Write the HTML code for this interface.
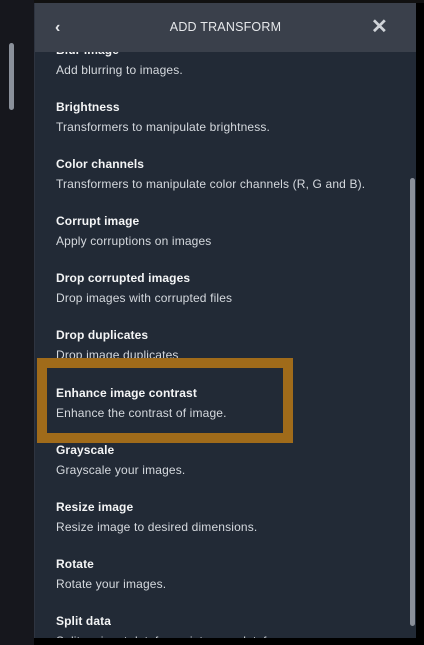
<!DOCTYPE html>
<html><head><style>
body{margin:0;width:424px;height:645px;background:#000;position:relative;overflow:hidden;font-family:"Liberation Sans",sans-serif}
.left{position:absolute;left:0;top:0;width:34px;height:645px;background:#16171d}
.lsb{position:absolute;left:9px;top:43px;width:5px;height:67px;background:#8a909a;border-radius:3px}
.panel{position:absolute;left:34px;top:3px;width:381px;height:635px;background:#222a36;overflow:hidden;border-left:1px solid #2e3440}
.hdr{position:absolute;left:0;top:0;width:381px;height:49px;background:#3a404b;z-index:2;color:#e6e8eb;font-size:12.5px;text-align:center;line-height:49px;letter-spacing:.2px}
.hdr .b{position:absolute;left:20px;top:0;font-size:16px;font-weight:bold}
.hdr .x{position:absolute;right:28px;top:0;font-size:20px;font-weight:bold;color:#cfd3d8}
.it{position:absolute;left:21px;color:#fff}
.t{font-size:12px;font-weight:bold;color:#f4f5f6;letter-spacing:.1px}
.d{font-size:12px;color:#d5d9de;margin-top:6px;letter-spacing:.15px}
.sb{position:absolute;left:375px;top:175px;width:5px;height:448px;background:#8a909a;border-radius:3px}
.hl{position:absolute;left:37px;top:358px;width:236px;height:65px;border:10px solid #a06b1a}
.top{position:absolute;left:0;top:0;width:424px;height:3px;background:#111}
</style></head><body>
<div class="top"></div>
<div class="left"><div class="lsb"></div></div>
<div class="panel">
<div class="hdr"><span class="b">&#8249;</span>ADD TRANSFORM<span class="x">&#10005;</span></div>
<div class="it" style="top:40px"><div class="t">Blur image</div><div class="d">Add blurring to images.</div></div>
<div class="it" style="top:97px"><div class="t">Brightness</div><div class="d">Transformers to manipulate brightness.</div></div>
<div class="it" style="top:154px"><div class="t">Color channels</div><div class="d">Transformers to manipulate color channels (R, G and B).</div></div>
<div class="it" style="top:211px"><div class="t">Corrupt image</div><div class="d">Apply corruptions on images</div></div>
<div class="it" style="top:268px"><div class="t">Drop corrupted images</div><div class="d">Drop images with corrupted files</div></div>
<div class="it" style="top:325px"><div class="t">Drop duplicates</div><div class="d">Drop image duplicates</div></div>
<div class="it" style="top:383px"><div class="t">Enhance image contrast</div><div class="d">Enhance the contrast of image.</div></div>
<div class="it" style="top:440px"><div class="t">Grayscale</div><div class="d">Grayscale your images.</div></div>
<div class="it" style="top:497px"><div class="t">Resize image</div><div class="d">Resize image to desired dimensions.</div></div>
<div class="it" style="top:554px"><div class="t">Rotate</div><div class="d">Rotate your images.</div></div>
<div class="it" style="top:611px"><div class="t">Split data</div><div class="d">Split an input dataframe into new dataframes</div></div>
<div class="sb"></div>
</div>
<div class="hl"></div>
</body></html>
